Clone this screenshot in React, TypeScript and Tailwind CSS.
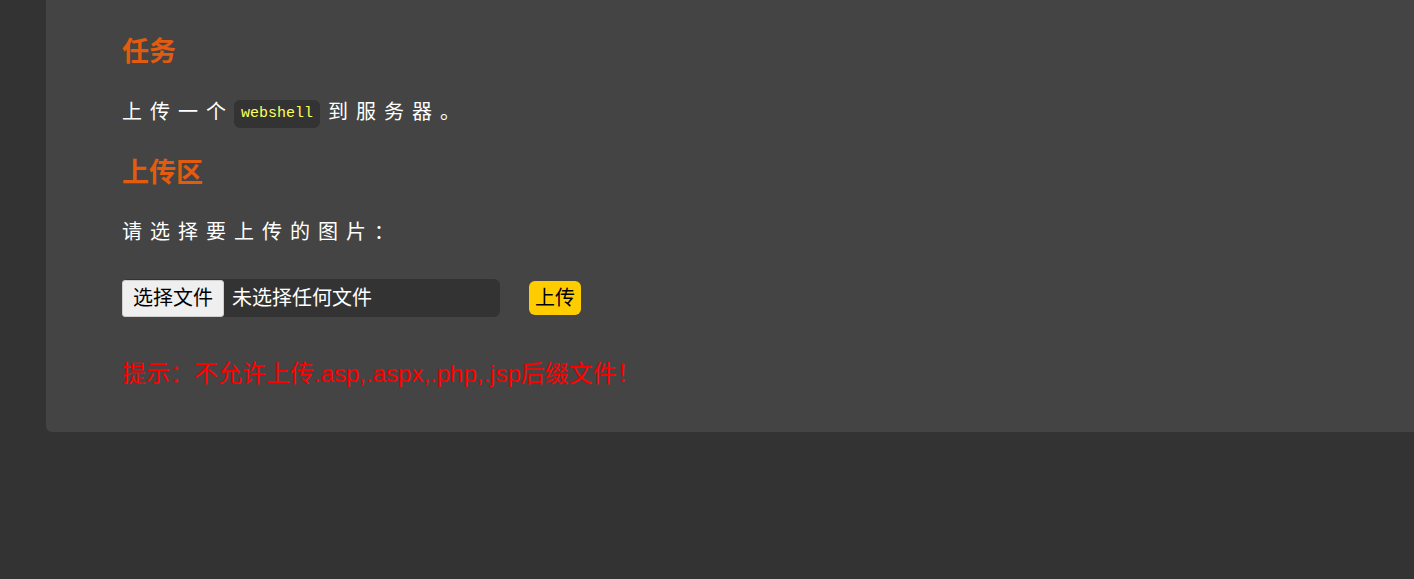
const cjk = { fontFamily: '"Liberation Sans", "Noto Sans CJK SC", sans-serif' };
const mono = { fontFamily: '"Liberation Mono", monospace' };

export default function App() {
  return (
    <div className="min-h-[579px] bg-[#333333]" style={cjk}>
      <div className="ml-[46px] rounded-bl-md bg-[#444444] pl-[76px] pt-[36px] pb-[43px]">
        <h2 className="text-[27px] font-bold leading-[32px] text-[#e35b0e]">任务</h2>

        <p className="mt-[29px] flex h-[30px] items-center text-[20px] leading-[30px] tracking-[8px] text-white">
          <span>上传一个</span>
          <code
            className="mr-[8px] translate-y-[2px] rounded-md bg-[#333333] px-[7px] py-[4px] text-[15px] font-normal leading-[20px] tracking-normal text-[#ffff5a]"
            style={mono}
          >
            webshell
          </code>
          <span>到服务器。</span>
        </p>

        <h2 className="mt-[30px] text-[27px] font-bold leading-[32px] text-[#e35b0e]">上传区</h2>

        <p className="mt-[28px] text-[20px] leading-[30px] tracking-[8px] text-white">请选择要上传的图片：</p>

        <div className="mt-[32px] flex items-center">
          <div className="flex h-[38px] w-[378px] items-center rounded-md bg-[#333333]">
            <span className="flex h-[37px] w-[102px] items-center justify-center rounded-[3px] border border-[#cfcfcf] bg-[#efefef] text-[20px] text-black">
              选择文件
            </span>
            <span className="ml-[8px] text-[20px] text-white">未选择任何文件</span>
          </div>
          <button className="ml-[29px] h-[34px] w-[52px] rounded-md bg-[#ffcc00] text-[20px] text-black">上传</button>
        </div>

        <p className="mt-[42px] text-[24px] leading-[30px] text-[#ff0000]">
          提示：不允许上传.asp,.aspx,.php,.jsp后缀文件！
        </p>
      </div>
    </div>
  );
}
